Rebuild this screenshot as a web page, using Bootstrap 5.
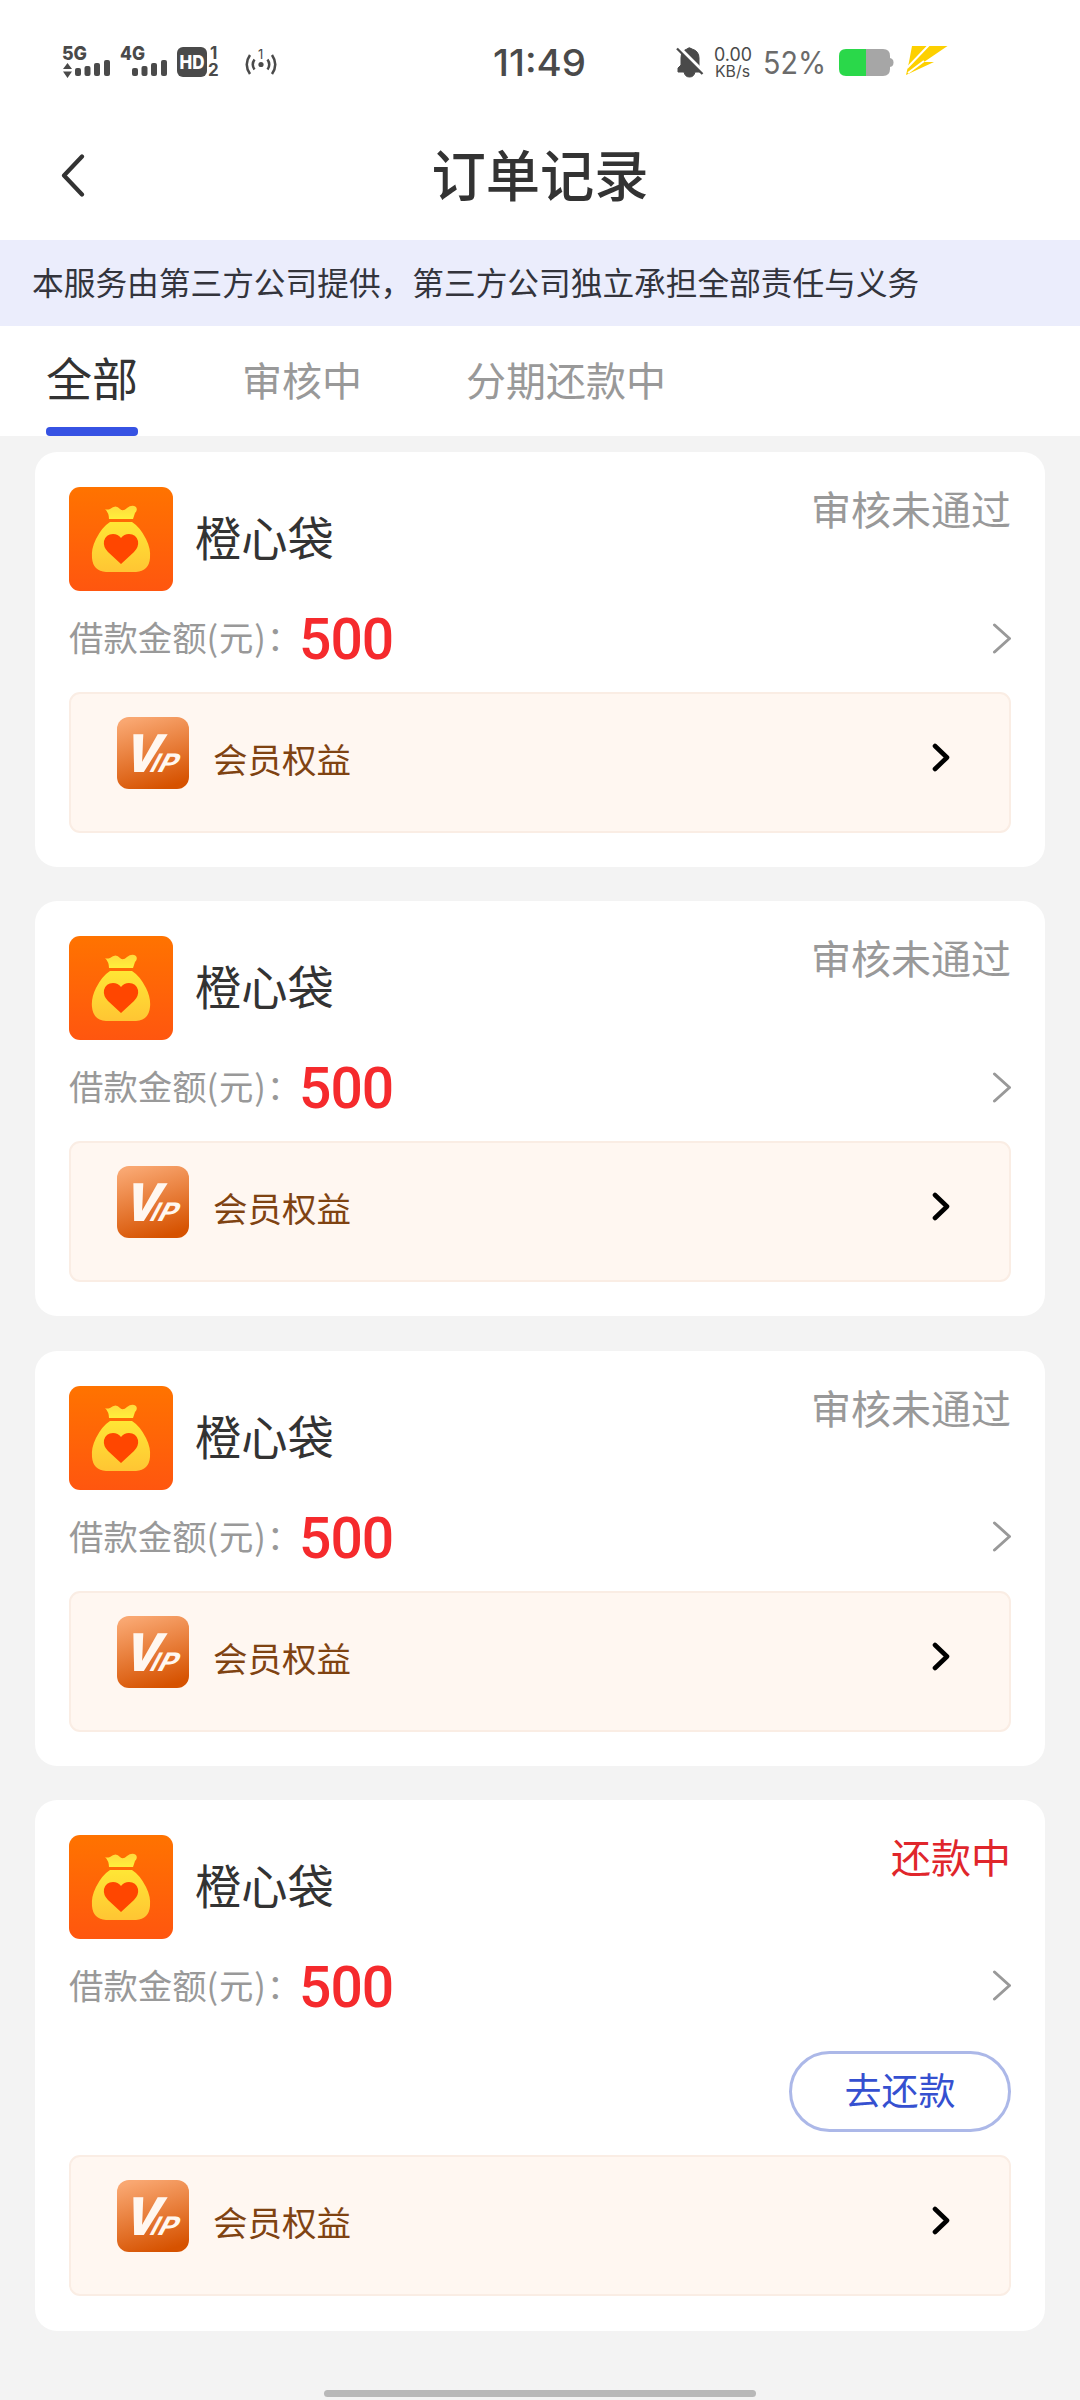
<!DOCTYPE html>
<html lang="zh-CN">
<head>
<meta charset="utf-8">
<meta name="viewport" content="width=device-width, initial-scale=1">
<title>订单记录</title>
<link href="https://cdn.jsdelivr.net/npm/bootstrap@5.3.0/dist/css/bootstrap.min.css" rel="stylesheet">
<style>
body{font-family:"Noto Sans CJK SC",sans-serif;background:#f3f3f3;color:#333;width:1080px;height:2400px;overflow:hidden}
svg{display:block;flex:none}
svg text{font-family:Inter,Roboto,sans-serif}
.status-bar{height:120px}
.title-bar{height:120px;padding:0 61px}
.title-bar h1{font-size:54.3px;line-height:80px;font-weight:500;margin-top:-15px;color:#333}
.back-icon{margin-top:-9px}
.notice{height:86px;background:#ebedfc;padding-left:32px;font-size:31.7px;line-height:82px;color:#33343c}
.order-tabs{height:110px;padding-left:46px;gap:104px}
.order-tabs .nav-link{padding:0;height:110px;line-height:106px;font-size:40px;color:#999;border-radius:0}
.order-tabs .nav-link.active{color:#333;font-size:46px;line-height:101px}
.order-tabs .nav-link.active::after{content:"";display:block;height:9px;border-radius:4px;background:#3652e3}
.orders{padding:16px 35px 0;gap:34.25px}
.order{border:0;border-radius:22px;padding:35px 34px 34px;height:415px}
.order-due{height:531px}
.order-name{font-size:46.3px;line-height:97px;margin-left:22px;color:#333}
.order-state{font-size:40px;line-height:42px;color:#999}
.order-due .order-state{color:#e0262b}
.amount-row{height:94px;margin-bottom:7px}
.amount-label{font-size:34.4px;color:#999;line-height:90px;height:94px}
.amount-label span{letter-spacing:.8px}
.amount{font-family:Roboto,sans-serif;font-size:57px;font-weight:500;color:#f52a2d;line-height:97px;height:94px;margin-left:-2px;letter-spacing:-1px}
.pay-btn{width:222px;height:81px;border:3px solid #acb8e8;border-radius:41px;color:#3550d0;font-size:37px;line-height:69px;padding:0 0 4px;background:#fff;margin:11px 0 23px}
.pay-btn:hover{border-color:#acb8e8;color:#3550d0}
.benefit{height:141px;background:#fff7f1;border:2px solid #faede4;border-radius:11px;padding:23px 59px 0 46px}
.benefit-label{font-size:34.5px;line-height:40px;color:#7f4312;margin:21px 0 0 24px}
.benefit-arrow{margin-top:26px}
.home-bar{width:432px;height:7px;border-radius:4px;background:#b8b8b8;margin-top:59px}
</style>
</head>
<body>
<svg width="0" height="0" class="position-absolute" aria-hidden="true">
  <defs>
    <linearGradient id="orange" x1="0" y1="0" x2="0" y2="1"><stop offset="0" stop-color="#ff7300"/><stop offset="1" stop-color="#ff560f"/></linearGradient>
    <linearGradient id="gold" x1="0" y1="0" x2="0" y2="1"><stop offset="0" stop-color="#ffe635"/><stop offset="1" stop-color="#ffc533"/></linearGradient>
    <linearGradient id="crown" x1="0" y1="0" x2="0" y2="1"><stop offset="0" stop-color="#ffd93c"/><stop offset="1" stop-color="#fff03c"/></linearGradient>
    <linearGradient id="copper" x1=".3" y1="0" x2=".6" y2="1"><stop offset="0" stop-color="#f9a771"/><stop offset="1" stop-color="#d65200"/></linearGradient>
    <symbol id="bag" viewBox="0 0 104 104">
      <rect width="104" height="104" rx="11" fill="url(#orange)"/>
      <path d="M36 22Q38 23 41 22Q47 17 51 22Q54 25 58 21Q63 17 67 20Q69 23 66 26L64 32H40Q40 26 36 22Z" fill="url(#crown)"/>
      <path d="M41 35H63Q71 40 77 52Q82 62 81 71Q80 84 67 85H37Q24 84 23 71Q22 62 27 52Q33 40 41 35Z" fill="url(#gold)"/>
      <path d="M52 77L39 65Q34 60 35 54Q37 47 44 47Q49 47 52 51Q55 47 60 47Q67 47 69 54Q70 60 65 65Z" fill="#ff4600"/>
    </symbol>
    <symbol id="vip" viewBox="0 0 72 72">
      <rect width="72" height="72" rx="12" fill="url(#copper)"/>
      <g fill="#fff7f0" font-weight="800">
        <text transform="translate(5 55) skewX(-17)" font-size="53" font-weight="900" textLength="34" lengthAdjust="spacingAndGlyphs" style="font-family:Roboto">V</text>
        <text transform="translate(31 55) skewX(-28)" font-size="26" textLength="7" lengthAdjust="spacingAndGlyphs" style="font-family:Roboto">I</text>
        <text transform="translate(39 55) skewX(-28)" font-size="26" textLength="18" lengthAdjust="spacingAndGlyphs" style="font-family:Roboto">P</text>
      </g>
    </symbol>
    <symbol id="more" viewBox="0 0 19 31"><path d="M2.500 2L17.500 15.500L2.500 29" fill="none" stroke="#999" stroke-width="3" stroke-linecap="round" stroke-linejoin="round"/></symbol>
    <symbol id="go" viewBox="0 0 18 30"><path d="M3 3L15 14.500L3 26" fill="none" stroke="#000" stroke-width="4.600" stroke-linecap="round" stroke-linejoin="round"/></symbol>
  </defs>
</svg>

<header class="bg-white">
  <div class="status-bar d-flex">
    <svg width="460" height="120" fill="#4a4a4a">
      <g font-size="19" font-weight="800">
        <text x="62" y="59.500" textLength="25" lengthAdjust="spacingAndGlyphs">5G</text>
        <text x="120" y="59.500" textLength="25" lengthAdjust="spacingAndGlyphs">4G</text>
      </g>
      <path d="M67.500 63L72 69H63ZM67.500 78L72 71.500H63Z"/>
      <rect x="75" y="68" width="6" height="8" rx="2"/><rect x="84.500" y="66" width="6" height="10" rx="2"/><rect x="94" y="63" width="6" height="13" rx="2"/><rect x="104" y="60" width="6" height="16" rx="2"/>
      <rect x="132" y="68" width="6" height="8" rx="2"/><rect x="141.500" y="66" width="6" height="10" rx="2"/><rect x="151" y="63" width="6" height="13" rx="2"/><rect x="161" y="60" width="6" height="16" rx="2"/>
      <rect x="177" y="47" width="30" height="30" rx="6"/>
      <text x="179.500" y="69" font-size="19" font-weight="800" fill="#fff" textLength="25" lengthAdjust="spacingAndGlyphs">HD</text>
      <text x="210" y="59" font-size="17" font-weight="700">1</text>
      <text x="208" y="76" font-size="17" font-weight="700">2</text>
      <circle cx="261" cy="64.500" r="2.600"/>
      <text x="258" y="58.500" font-size="13">1</text>
      <path d="M254.500 59.500Q251 64.500 254.500 69.500M267.500 59.500Q271 64.500 267.500 69.500M250 55Q243.500 64.500 250 74M272 55Q278.500 64.500 272 74" fill="none" stroke="#4a4a4a" stroke-width="2.500"/>
    </svg>
    <svg width="160" height="120"><text x="33" y="75.500" font-size="37" font-weight="500" fill="#4a4a4a" textLength="93" lengthAdjust="spacingAndGlyphs">11:49</text></svg>
    <svg width="460" height="120" viewBox="620 0 460 120" fill="#4a4a4a">
      <path d="M678 69V68L681 65V58Q681 51 687 49Q689 46.500 692 49Q699 51 699 58V66L702 69V72H695Q694 77 689.500 77Q685 77 684 72H678Z" stroke="#4a4a4a" stroke-linejoin="round"/>
      <path d="M678.500 47L704.500 73" stroke="#fff" stroke-width="3.500"/><path d="M677 48.500L702.500 74" stroke="#4a4a4a" stroke-width="2.300"/>
      <text x="714" y="61" font-size="18" textLength="38" lengthAdjust="spacingAndGlyphs">0.00</text>
      <text x="715" y="76.500" font-size="15.500" textLength="35" lengthAdjust="spacingAndGlyphs">KB/s</text>
      <text x="763" y="74" font-size="30.500" fill="#6b6b6b" textLength="63" lengthAdjust="spacingAndGlyphs">52%</text>
      <path d="M889 58Q893.500 58 893.500 62.500Q893.500 67 889 67Z" fill="#a6a6a6"/>
      <path d="M866 49H883Q890 49 890 56V69Q890 76 883 76H866Z" fill="#a6a6a6"/>
      <path d="M866 49H846Q839 49 839 56V69Q839 76 846 76H866Z" fill="#2ad84a"/>
      <path d="M912 46H947.500L924 62H934L906 75L909 62Z" fill="#fdd000"/>
      <path d="M929 45L907 68M924 61L908 73" stroke="#fff" stroke-width="2" fill="none"/>
    </svg>
  </div>
  <nav class="title-bar d-flex align-items-center">
    <svg class="back-icon" width="24" height="43"><path d="M21 2.500L3 21.500L21 40.500" fill="none" stroke="#333" stroke-width="4.200" stroke-linecap="round" stroke-linejoin="round"/></svg>
    <h1 class="flex-grow-1 text-center mb-0 pe-4">订单记录</h1>
  </nav>
  <div class="notice text-nowrap">本服务由第三方公司提供，第三方公司独立承担全部责任与义务</div>
  <ul class="nav order-tabs">
    <li class="nav-item"><a class="nav-link active" href="#">全部</a></li>
    <li class="nav-item"><a class="nav-link" href="#">审核中</a></li>
    <li class="nav-item"><a class="nav-link" href="#">分期还款中</a></li>
  </ul>
</header>

<main class="orders d-flex flex-column">
  <article class="card order">
    <div class="d-flex align-items-start">
      <svg width="104" height="104"><use href="#bag"/></svg>
      <div class="order-name">橙心袋</div>
      <div class="order-state ms-auto">审核未通过</div>
    </div>
    <div class="amount-row d-flex align-items-center">
      <span class="amount-label">借款金额<span>(元)</span>：</span><span class="amount">500</span>
      <svg class="ms-auto" width="19" height="31"><use href="#more"/></svg>
    </div>
    <div class="benefit d-flex align-items-start">
      <svg width="72" height="72"><use href="#vip"/></svg>
      <div class="benefit-label">会员权益</div>
      <svg class="benefit-arrow ms-auto" width="18" height="30"><use href="#go"/></svg>
    </div>
  </article>

  <article class="card order">
    <div class="d-flex align-items-start">
      <svg width="104" height="104"><use href="#bag"/></svg>
      <div class="order-name">橙心袋</div>
      <div class="order-state ms-auto">审核未通过</div>
    </div>
    <div class="amount-row d-flex align-items-center">
      <span class="amount-label">借款金额<span>(元)</span>：</span><span class="amount">500</span>
      <svg class="ms-auto" width="19" height="31"><use href="#more"/></svg>
    </div>
    <div class="benefit d-flex align-items-start">
      <svg width="72" height="72"><use href="#vip"/></svg>
      <div class="benefit-label">会员权益</div>
      <svg class="benefit-arrow ms-auto" width="18" height="30"><use href="#go"/></svg>
    </div>
  </article>

  <article class="card order">
    <div class="d-flex align-items-start">
      <svg width="104" height="104"><use href="#bag"/></svg>
      <div class="order-name">橙心袋</div>
      <div class="order-state ms-auto">审核未通过</div>
    </div>
    <div class="amount-row d-flex align-items-center">
      <span class="amount-label">借款金额<span>(元)</span>：</span><span class="amount">500</span>
      <svg class="ms-auto" width="19" height="31"><use href="#more"/></svg>
    </div>
    <div class="benefit d-flex align-items-start">
      <svg width="72" height="72"><use href="#vip"/></svg>
      <div class="benefit-label">会员权益</div>
      <svg class="benefit-arrow ms-auto" width="18" height="30"><use href="#go"/></svg>
    </div>
  </article>

  <article class="card order order-due">
    <div class="d-flex align-items-start">
      <svg width="104" height="104"><use href="#bag"/></svg>
      <div class="order-name">橙心袋</div>
      <div class="order-state ms-auto">还款中</div>
    </div>
    <div class="amount-row d-flex align-items-center">
      <span class="amount-label">借款金额<span>(元)</span>：</span><span class="amount">500</span>
      <svg class="ms-auto" width="19" height="31"><use href="#more"/></svg>
    </div>
    <button type="button" class="btn pay-btn align-self-end">去还款</button>
    <div class="benefit d-flex align-items-start">
      <svg width="72" height="72"><use href="#vip"/></svg>
      <div class="benefit-label">会员权益</div>
      <svg class="benefit-arrow ms-auto" width="18" height="30"><use href="#go"/></svg>
    </div>
  </article>
</main>
<div class="home-bar mx-auto"></div>
<script src="https://cdn.jsdelivr.net/npm/bootstrap@5.3.0/dist/js/bootstrap.bundle.min.js"></script>
</body>
</html>
